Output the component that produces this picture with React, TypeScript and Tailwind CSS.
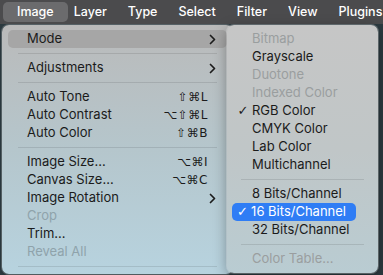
import React from "react";

const sans = "font-['Inter','Noto_Sans',sans-serif]";
const sym = "font-['DejaVu_Sans',sans-serif]";

type Item =
  | { sep: true }
  | { label: string; keys?: string; sub?: boolean; off?: boolean; hot?: boolean; check?: boolean };

const mainItems: Item[] = [
  { label: "Mode", sub: true, hot: true },
  { sep: true },
  { label: "Adjustments", sub: true },
  { sep: true },
  { label: "Auto Tone", keys: "⇧⌘L" },
  { label: "Auto Contrast", keys: "⌥⇧⌘L" },
  { label: "Auto Color", keys: "⇧⌘B" },
  { sep: true },
  { label: "Image Size...", keys: "⌥⌘I" },
  { label: "Canvas Size...", keys: "⌥⌘C" },
  { label: "Image Rotation", sub: true },
  { label: "Crop", off: true },
  { label: "Trim..." },
  { label: "Reveal All", off: true },
  { sep: true },
];

const modeItems: Item[] = [
  { label: "Bitmap", off: true },
  { label: "Grayscale" },
  { label: "Duotone", off: true },
  { label: "Indexed Color", off: true },
  { label: "RGB Color", check: true },
  { label: "CMYK Color" },
  { label: "Lab Color" },
  { label: "Multichannel" },
  { sep: true },
  { label: "8 Bits/Channel" },
  { label: "16 Bits/Channel", check: true, hot: true },
  { label: "32 Bits/Channel" },
  { sep: true },
  { label: "Color Table...", off: true },
];

function Chevron() {
  return (
    <svg width="7" height="11" viewBox="0 0 7 11" className="shrink-0">
      <path d="M1.5 1.5 L5.5 5.5 L1.5 9.5" fill="none" stroke="#1c1c1c" strokeWidth="1.7" strokeLinecap="round" strokeLinejoin="round" />
    </svg>
  );
}

function MainRow({ item }: { item: Item }) {
  if ("sep" in item) {
    return (
      <div className="h-[11px] flex items-center px-[16px]">
        <div className="h-px w-full bg-black/10" />
      </div>
    );
  }
  return (
    <div
      className={`h-[18px] mx-[6px] rounded-[5px] flex items-center pl-[19px] pr-[11px] text-[13px] whitespace-nowrap ${
        item.hot ? "bg-[#a6a6a6]" : ""
      } ${item.off ? "text-[#8fa3ab]" : "text-[#1b1b1b]"}`}
    >
      <span className="flex-1">{item.label}</span>
      {item.keys && (
        <span className={`${sym} text-[12px] mr-[8px] tracking-[0.5px]`}>{item.keys}</span>
      )}
      {item.sub && <Chevron />}
    </div>
  );
}

function SubRow({ item }: { item: Item }) {
  if ("sep" in item) {
    return (
      <div className="h-[11px] flex items-center px-[14px]">
        <div className="h-px w-full bg-black/10" />
      </div>
    );
  }
  return (
    <div className="h-[18px] flex items-center">
      <div
        className={`h-full flex items-center ml-[5px] pl-[2px] pr-[10px] rounded-[5px] text-[13px] whitespace-nowrap ${
          item.hot ? "bg-[#2f7df5] text-white w-[124px]" : item.off ? "text-[#9a9e9f]" : "text-[#1b1b1b]"
        }`}
      >
        <span className={`${sym} w-[18px] text-[13px] font-bold text-center`}>{item.check ? "✓" : ""}</span>
        <span>{item.label}</span>
      </div>
    </div>
  );
}

export default function App() {
  const bar = ["Layer", "Type", "Select", "Filter", "View", "Plugins"];
  return (
    <div className={`w-[383px] h-[275px] overflow-hidden bg-[#2c3a40] ${sans} antialiased`}>
      <div className="h-[24px] bg-[#4b4b4d] flex items-center pl-[3px] text-white text-[12.5px] font-medium whitespace-nowrap">
        <div className="h-[20px] px-[14px] rounded-[5px] bg-[#6b6b6d] flex items-center">Image</div>
        <div className="flex items-center gap-[21px] ml-[6px]">
          {bar.map((b) => (
            <span key={b}>{b}</span>
          ))}
        </div>
      </div>

      <div className="flex items-start pt-px">
        <div className="ml-[2px] w-[231px] pt-[5px] pb-[2px] rounded-[7px] bg-gradient-to-b from-[#bababa] via-[#b5c6cc] to-[#b7d3df] ring-1 ring-white/20 shadow-lg">
          {mainItems.map((it, i) => (
            <MainRow key={i} item={it} />
          ))}
        </div>
        <div className="-ml-[6px] relative z-10 w-[151px] pt-[5px] pb-[5px] rounded-[7px] bg-gradient-to-b from-[#c6c6c6] via-[#c0c6c7] to-[#b9ccd2] ring-1 ring-white/25 shadow-[0_4px_14px_rgba(0,0,0,0.35)]">
          {modeItems.map((it, i) => (
            <SubRow key={i} item={it} />
          ))}
        </div>
      </div>
    </div>
  );
}
